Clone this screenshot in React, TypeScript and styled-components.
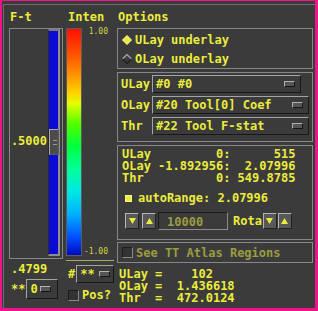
import styled, { createGlobalStyle } from 'styled-components';

const YELLOW = '#ecec3c';
const DIM = '#9c9c40';
const BG = '#3b3b3b';
const ETCH = '#878787';
const HI = '#a4a4a4';
const LO = '#181818';

const GlobalStyle = createGlobalStyle`
  html, body { margin: 0; padding: 0; background: ${BG}; }
  * { box-sizing: border-box; }
`;

const Window = styled.div`
  width: 318px;
  height: 311px;
  overflow: hidden;
  background: ${BG};
  border-style: solid;
  border-color: #f0148c;
  border-width: 1px 3px 3px 2px;
  font-family: "DejaVu Sans Mono", "Liberation Mono", monospace;
  font-size: 12px;
  font-weight: bold;
  line-height: 12px;
  color: ${YELLOW};
  white-space: pre;
`;

const Inner = styled.div`
  display: flex;
  height: calc(100% - 3px);
  margin: 3px 0 0 1px;
  border-top: 1px solid #6c6c6c;
  border-left: 1px solid #6c6c6c;
`;

const Column = styled.div<{ $w: number }>`
  display: flex;
  flex-direction: column;
  width: ${(p) => p.$w}px;
`;

const Header = styled.div<{ $pl: number }>`
  height: 23px;
  padding: 6px 0 0 ${(p) => p.$pl}px;
`;

/* threshold slider */
const SliderFrame = styled.div`
  display: flex;
  width: 54px;
  height: 231px;
  margin-left: 5px;
  border: 1px solid ${ETCH};
`;

const ValueArea = styled.div`
  flex: 1;
  padding: 106px 1px 0 0;
  text-align: right;
`;

const Trough = styled.div`
  position: relative;
  width: 12px;
  height: 227px;
  margin-right: 2px;
  background: #0a0ad4;
  border-style: solid;
  border-width: 2px 2px 2px 1px;
  border-color: #7a7a7a #8e8e8e #8e8e8e #2a2a2a;
`;

const Thumb = styled.div`
  position: absolute;
  left: 0;
  top: 98px;
  width: 10px;
  height: 26px;
  background: #4c4c4c;
  border: 1px solid;
  border-color: #a8a8a8 #5a5a5a #5a5a5a #a8a8a8;

  &::after {
    content: '';
    position: absolute;
    left: 3px;
    right: 1px;
    top: 10px;
    height: 3px;
    border-top: 1px solid #9a9a9a;
    border-bottom: 1px solid #9a9a9a;
  }
`;

const FootText = styled.div<{ $mt: number }>`
  margin-top: ${(p) => p.$mt}px;
  padding-left: 7px;
`;

const MenuRow = styled.div<{ $mt: number; $pl: number }>`
  display: flex;
  align-items: center;
  margin-top: ${(p) => p.$mt}px;
  padding-left: ${(p) => p.$pl}px;
`;

const MenuBox = styled.div<{ $w: number; $h: number }>`
  display: flex;
  align-items: center;
  width: ${(p) => p.$w}px;
  height: ${(p) => p.$h}px;
  margin-left: 1px;
  padding-left: 3px;
  border: 1px solid;
  border-color: ${HI} ${LO} ${LO} ${HI};
`;

const Indicator = styled.div<{ $mr: number }>`
  width: 11px;
  height: 6px;
  margin: 0 ${(p) => p.$mr}px 0 auto;
  background: #555;
  border: 1px solid;
  border-color: #b0b0b0 #151515 #151515 #b0b0b0;
`;

/* colour bar */
const ColorRow = styled.div`
  display: flex;
  height: 228px;
  margin-left: 2px;
`;

const ColorBar = styled.div`
  width: 16px;
  border: 1px solid #5c5c5c;
  background: linear-gradient(
    to bottom,
    #ff1000 0%,
    #ff4a00 10%,
    #ff9000 20%,
    #ffd000 28%,
    #e4ff00 33%,
    #50ff00 42%,
    #00ff40 52%,
    #00ff98 62%,
    #00e8e4 72%,
    #00b0ff 82%,
    #0050ff 92%,
    #0008c0 100%
  );
`;

const ScaleLabels = styled.div`
  display: flex;
  flex-direction: column;
  justify-content: space-between;
  width: 26px;
  font-size: 8px;
  line-height: 8px;
  font-weight: normal;
  text-align: right;
  color: #d4d444;
`;

const Separator = styled.div`
  width: 48px;
  height: 1px;
  margin: 4px 0 0 2px;
  background: #a8a866;
`;

const CheckBox = styled.div<{ $size: number; $fill?: string }>`
  flex: none;
  width: ${(p) => p.$size}px;
  height: ${(p) => p.$size}px;
  background: ${(p) => p.$fill ?? '#333'};
  border: 1px solid;
  border-color: ${(p) => (p.$fill ? '#f8f880' : '#1c1c1c #8a8a8a #8a8a8a #1c1c1c')};
`;

const Label = styled.span<{ $ml?: number; $dim?: boolean }>`
  margin-left: ${(p) => p.$ml ?? 0}px;
  color: ${(p) => (p.$dim ? DIM : YELLOW)};
`;

/* right side */
const RightPane = styled.div`
  display: flex;
  flex-direction: column;
  width: 196px;
  margin-left: 3px;
`;

const Frame = styled.div<{ $h: number; $mt?: number }>`
  height: ${(p) => p.$h}px;
  margin-top: ${(p) => p.$mt ?? 0}px;
  border: 1px solid ${ETCH};
`;

const RadioFrame = styled(Frame)`
  padding: 1px 0 0 4px;
`;

const RadioRow = styled.div`
  display: flex;
  align-items: center;
  height: 19px;
`;

const OptionFrame = styled(Frame)`
  padding: 2px 0 0 3px;
`;

const OptionRow = styled.div`
  display: flex;
  align-items: center;
  height: 21px;
  padding-bottom: 3px;
`;

const OptionLabel = styled.span`
  width: 31px;
`;

const OptionButton = styled.div<{ $w: number }>`
  display: flex;
  align-items: center;
  width: ${(p) => p.$w}px;
  height: 18px;
  padding-left: 3px;
  border: 1px solid;
  border-color: ${HI} ${LO} ${LO} ${HI};
`;

const InfoFrame = styled(Frame)`
  padding: 2px 0 0 4px;
`;

const InfoLine = styled.div`
  line-height: 12px;
`;

const AutoRow = styled.div`
  display: flex;
  align-items: center;
  height: 12px;
  margin-top: 8px;
  padding-left: 3px;
`;

const ArrowRow = styled.div`
  display: flex;
  align-items: center;
  margin-top: 8px;
  padding-left: 3px;
`;

const ArrowButton = styled.div<{ $ml: number }>`
  display: flex;
  align-items: center;
  justify-content: center;
  width: 14px;
  height: 16px;
  margin-left: ${(p) => p.$ml}px;
  background: #585858;
  border: 1px solid;
  border-color: #b4b4b4 #202020 #202020 #b4b4b4;
`;

const Field = styled.div`
  width: 70px;
  height: 18px;
  margin-left: 2px;
  padding: 3px 0 0 8px;
  color: ${DIM};
  border: 1px solid;
  border-color: #1a1a1a #8a8a8a #8a8a8a #1a1a1a;
`;

const AtlasFrame = styled(Frame)`
  display: flex;
  align-items: center;
  padding-left: 4px;
`;

const Readout = styled.div`
  margin-top: 5px;
  padding-left: 2px;
`;

function Diamond({ on }: { on: boolean }) {
  return (
    <svg width="10" height="10" viewBox="0 0 10 10" style={{ flex: 'none' }}>
      <polygon
        points="5,0.5 9.5,5 5,9.5 0.5,5"
        fill={on ? '#f0e83c' : 'none'}
        stroke={on ? '#fffcb0' : 'none'}
        strokeWidth="1"
      />
      {!on && (
        <>
          <polyline points="0.5,5 5,0.5 9.5,5" fill="none" stroke="#a8a8a8" strokeWidth="1.3" />
          <polyline points="0.5,5 5,9.5 9.5,5" fill="none" stroke="#202020" strokeWidth="1.3" />
        </>
      )}
    </svg>
  );
}

function Arrow({ up }: { up: boolean }) {
  return (
    <svg width="7" height="6" viewBox="0 0 7 6">
      <polygon points={up ? '3.5,0 7,6 0,6' : '0,0 7,0 3.5,6'} fill={YELLOW} />
    </svg>
  );
}

export default function App() {
  return (
    <Window>
      <GlobalStyle />
      <Inner>
        <Column $w={60}>
          <Header $pl={6}>F-t</Header>
          <SliderFrame>
            <ValueArea>.5000</ValueArea>
            <Trough>
              <Thumb />
            </Trough>
          </SliderFrame>
          <FootText $mt={4}>.4799</FootText>
          <MenuRow $mt={4} $pl={7}>
            <span>**</span>
            <MenuBox $w={32} $h={20}>
              <span>0</span>
              <Indicator $mr={6} />
            </MenuBox>
          </MenuRow>
        </Column>

        <Column $w={50}>
          <Header $pl={4}>Inten</Header>
          <ColorRow>
            <ColorBar />
            <ScaleLabels>
              <span>1.00</span>
              <span>-1.00</span>
            </ScaleLabels>
          </ColorRow>
          <Separator />
          <MenuRow $mt={4} $pl={4}>
            <span>#</span>
            <MenuBox $w={38} $h={18}>
              <span>**</span>
              <Indicator $mr={3} />
            </MenuBox>
          </MenuRow>
          <MenuRow $mt={6} $pl={4}>
            <CheckBox $size={11} />
            <Label $ml={3}>Pos?</Label>
          </MenuRow>
        </Column>

        <RightPane>
          <Header $pl={1}>Options</Header>
          <RadioFrame $h={41}>
            <RadioRow>
              <Diamond on />
              <Label $ml={3}>ULay underlay</Label>
            </RadioRow>
            <RadioRow>
              <Diamond on={false} />
              <Label $ml={3}>OLay underlay</Label>
            </RadioRow>
          </RadioFrame>

          <OptionFrame $h={70} $mt={3}>
            <OptionRow>
              <OptionLabel>ULay</OptionLabel>
              <OptionButton $w={149}>
                <span>#0 #0</span>
                <Indicator $mr={5} />
              </OptionButton>
            </OptionRow>
            <OptionRow>
              <OptionLabel>OLay</OptionLabel>
              <OptionButton $w={157}>
                <span>#20 Tool[0] Coef</span>
                <Indicator $mr={5} />
              </OptionButton>
            </OptionRow>
            <OptionRow>
              <OptionLabel>Thr</OptionLabel>
              <OptionButton $w={157}>
                <span>#22 Tool F-stat</span>
                <Indicator $mr={5} />
              </OptionButton>
            </OptionRow>
          </OptionFrame>

          <InfoFrame $h={95} $mt={3}>
            <InfoLine>{'ULay         0:      515'}</InfoLine>
            <InfoLine>{'OLay -1.892956:  2.07996'}</InfoLine>
            <InfoLine>{'Thr          0: 549.8785'}</InfoLine>
            <AutoRow>
              <CheckBox $size={7} $fill={YELLOW} />
              <Label $ml={6}>autoRange: 2.07996</Label>
            </AutoRow>
            <ArrowRow>
              <ArrowButton $ml={0}>
                <Arrow up={false} />
              </ArrowButton>
              <ArrowButton $ml={3}>
                <Arrow up />
              </ArrowButton>
              <Field>10000</Field>
              <Label $ml={5}>Rota</Label>
              <ArrowButton $ml={1}>
                <Arrow up={false} />
              </ArrowButton>
              <ArrowButton $ml={1}>
                <Arrow up />
              </ArrowButton>
            </ArrowRow>
          </InfoFrame>

          <AtlasFrame $h={21} $mt={2}>
            <CheckBox $size={11} />
            <Label $ml={3} $dim>
              See TT Atlas Regions
            </Label>
          </AtlasFrame>

          <Readout>
            <div>{'ULay =    102'}</div>
            <div>{'OLay =  1.436618'}</div>
            <div>{'Thr  =  472.0124'}</div>
          </Readout>
        </RightPane>
      </Inner>
    </Window>
  );
}
